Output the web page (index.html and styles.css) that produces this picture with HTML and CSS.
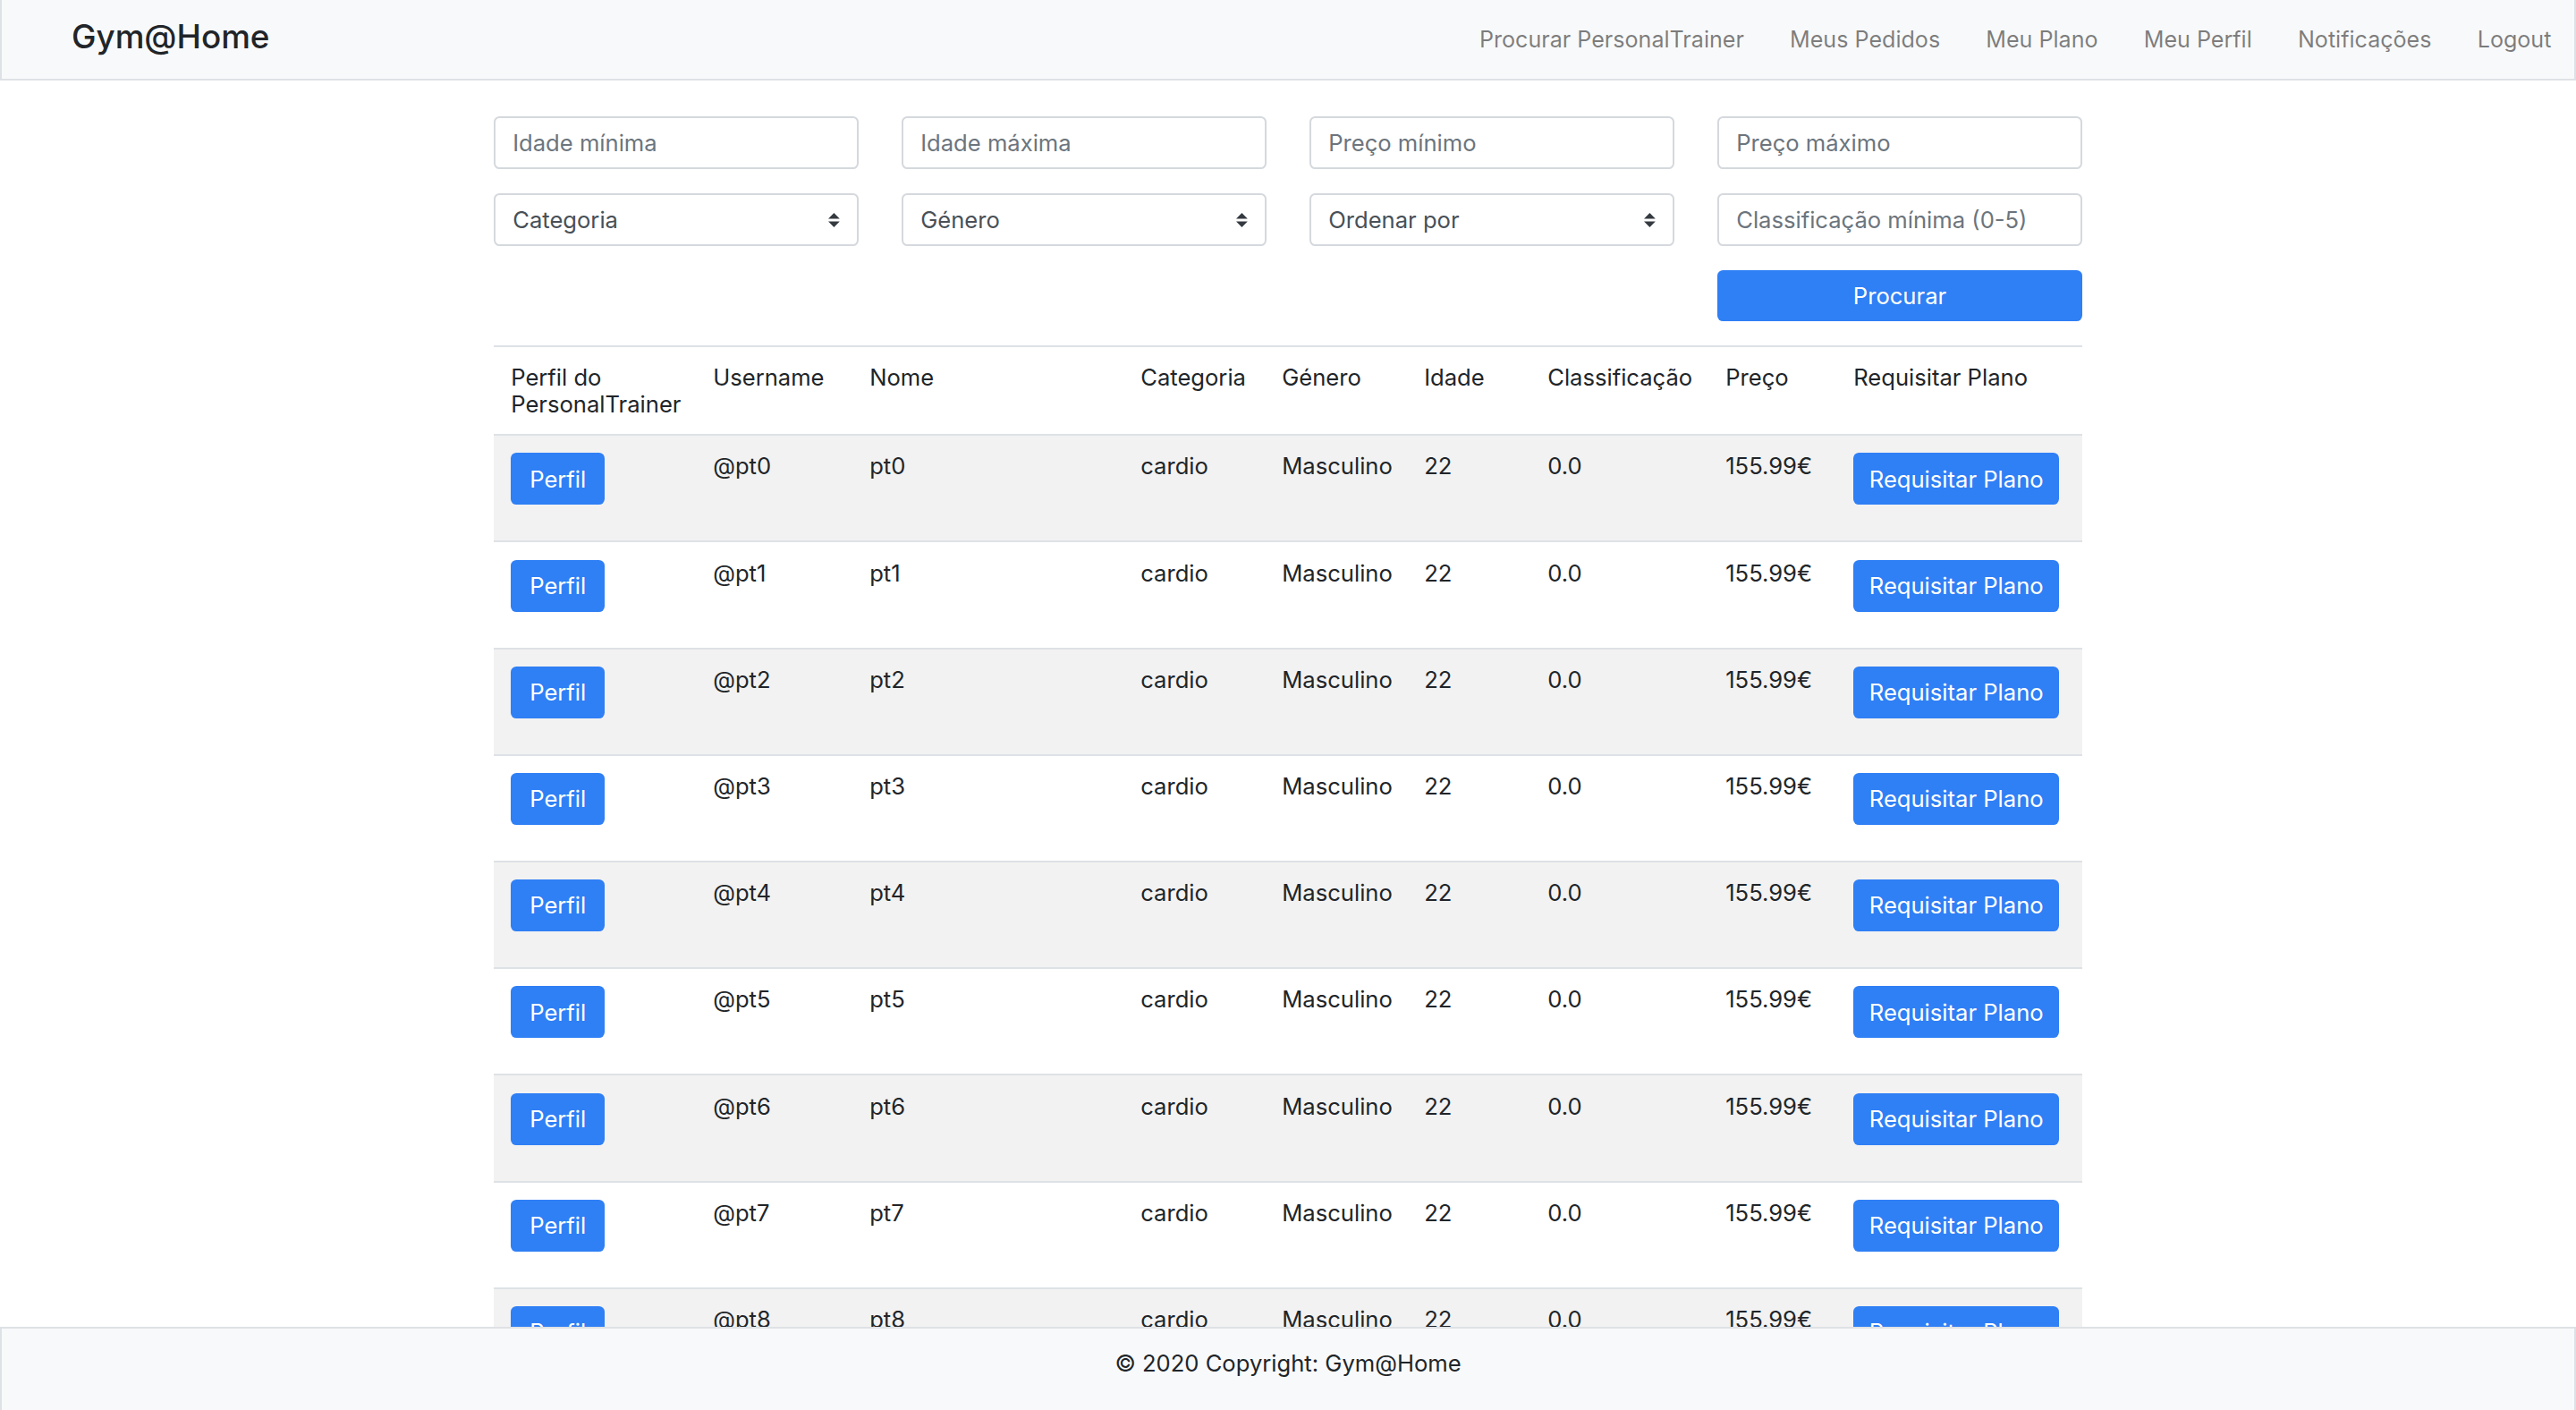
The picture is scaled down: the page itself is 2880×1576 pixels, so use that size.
FILE: index.html
```html
<!DOCTYPE html>
<html lang="pt">
<head>
<meta charset="utf-8">
<title>Gym@Home</title>
<link rel="stylesheet" href="styles.css">
</head>
<body>
<header class="navbar">
  <a class="brand" href="#">Gym@Home</a>
  <nav class="nav">
    <a class="nav-link" href="#">Procurar PersonalTrainer</a>
    <a class="nav-link" href="#">Meus Pedidos</a>
    <a class="nav-link" href="#">Meu Plano</a>
    <a class="nav-link" href="#">Meu Perfil</a>
    <a class="nav-link" href="#">Notificações</a>
    <a class="nav-link" href="#">Logout</a>
  </nav>
</header>

<main class="container">
  <form class="filters">
    <input class="form-control" type="text" placeholder="Idade mínima">
    <input class="form-control" type="text" placeholder="Idade máxima">
    <input class="form-control" type="text" placeholder="Preço mínimo">
    <input class="form-control" type="text" placeholder="Preço máximo">
    <div class="select-wrap">
      <select class="form-control custom-select"><option>Categoria</option></select>
      <svg class="select-arrow" viewBox="0 0 4 5" width="12.8" height="16"><path d="M2 0L0 2h4zm0 5L0 3h4z" fill="#343a40"/></svg>
    </div>
    <div class="select-wrap">
      <select class="form-control custom-select"><option>Género</option></select>
      <svg class="select-arrow" viewBox="0 0 4 5" width="12.8" height="16"><path d="M2 0L0 2h4zm0 5L0 3h4z" fill="#343a40"/></svg>
    </div>
    <div class="select-wrap">
      <select class="form-control custom-select"><option>Ordenar por</option></select>
      <svg class="select-arrow" viewBox="0 0 4 5" width="12.8" height="16"><path d="M2 0L0 2h4zm0 5L0 3h4z" fill="#343a40"/></svg>
    </div>
    <input class="form-control" type="text" placeholder="Classificação mínima (0-5)">
    <button class="btn btn-primary btn-search" type="button">Procurar</button>
  </form>

  <table class="table">
    <thead>
      <tr>
        <th class="c-perfil">Perfil do PersonalTrainer</th>
        <th class="c-user">Username</th>
        <th class="c-nome">Nome</th>
        <th class="c-cat">Categoria</th>
        <th class="c-gen">Género</th>
        <th class="c-idade">Idade</th>
        <th class="c-class">Classificação</th>
        <th class="c-preco">Preço</th>
        <th class="c-req">Requisitar Plano</th>
      </tr>
    </thead>
    <tbody>
      <tr><td><button class="btn btn-primary btn-perfil">Perfil</button></td><td>@pt0</td><td>pt0</td><td>cardio</td><td>Masculino</td><td>22</td><td>0.0</td><td>155.99€</td><td><button class="btn btn-primary">Requisitar Plano</button></td></tr>
      <tr><td><button class="btn btn-primary btn-perfil">Perfil</button></td><td>@pt1</td><td>pt1</td><td>cardio</td><td>Masculino</td><td>22</td><td>0.0</td><td>155.99€</td><td><button class="btn btn-primary">Requisitar Plano</button></td></tr>
      <tr><td><button class="btn btn-primary btn-perfil">Perfil</button></td><td>@pt2</td><td>pt2</td><td>cardio</td><td>Masculino</td><td>22</td><td>0.0</td><td>155.99€</td><td><button class="btn btn-primary">Requisitar Plano</button></td></tr>
      <tr><td><button class="btn btn-primary btn-perfil">Perfil</button></td><td>@pt3</td><td>pt3</td><td>cardio</td><td>Masculino</td><td>22</td><td>0.0</td><td>155.99€</td><td><button class="btn btn-primary">Requisitar Plano</button></td></tr>
      <tr><td><button class="btn btn-primary btn-perfil">Perfil</button></td><td>@pt4</td><td>pt4</td><td>cardio</td><td>Masculino</td><td>22</td><td>0.0</td><td>155.99€</td><td><button class="btn btn-primary">Requisitar Plano</button></td></tr>
      <tr><td><button class="btn btn-primary btn-perfil">Perfil</button></td><td>@pt5</td><td>pt5</td><td>cardio</td><td>Masculino</td><td>22</td><td>0.0</td><td>155.99€</td><td><button class="btn btn-primary">Requisitar Plano</button></td></tr>
      <tr><td><button class="btn btn-primary btn-perfil">Perfil</button></td><td>@pt6</td><td>pt6</td><td>cardio</td><td>Masculino</td><td>22</td><td>0.0</td><td>155.99€</td><td><button class="btn btn-primary">Requisitar Plano</button></td></tr>
      <tr><td><button class="btn btn-primary btn-perfil">Perfil</button></td><td>@pt7</td><td>pt7</td><td>cardio</td><td>Masculino</td><td>22</td><td>0.0</td><td>155.99€</td><td><button class="btn btn-primary">Requisitar Plano</button></td></tr>
      <tr><td><button class="btn btn-primary btn-perfil">Perfil</button></td><td>@pt8</td><td>pt8</td><td>cardio</td><td>Masculino</td><td>22</td><td>0.0</td><td>155.99€</td><td><button class="btn btn-primary">Requisitar Plano</button></td></tr>
      <tr><td><button class="btn btn-primary btn-perfil">Perfil</button></td><td>@pt9</td><td>pt9</td><td>cardio</td><td>Masculino</td><td>22</td><td>0.0</td><td>155.99€</td><td><button class="btn btn-primary">Requisitar Plano</button></td></tr>
    </tbody>
  </table>
</main>

<footer class="footer">© 2020 Copyright: Gym@Home</footer>
</body>
</html>
```

FILE: styles.css
```css
* { box-sizing: border-box; }

body {
  margin: 0;
  font-family: Inter, "Noto Sans", "Liberation Sans", sans-serif;
  font-size: 25.6px;
  line-height: 29.4px;
  color: #212529;
  background: #fff;
}

.navbar {
  display: flex;
  align-items: center;
  justify-content: space-between;
  height: 90px;
  background: #f8f9fa;
  border: 2px solid #dee2e6;
  border-top: 0;
  padding-left: 78px;
}

.brand {
  font-size: 36.8px;
  line-height: 46px;
  color: #212529;
  text-decoration: none;
  font-weight: 500;
  padding-bottom: 6px;
}

.nav {
  display: flex;
  align-items: center;
}

.nav-link {
  color: rgba(0, 0, 0, 0.5);
  text-decoration: none;
  font-size: 25.1px;
  padding: 0 25.6px;
  line-height: 38.4px;
}

.container {
  width: 1776px;
  margin: 40px auto 0;
  padding-bottom: 120px;
}

.filters {
  display: grid;
  grid-template-columns: repeat(4, 408px);
  column-gap: 48px;
  row-gap: 27px;
}

.form-control {
  display: block;
  width: 100%;
  height: 59px;
  padding: 0 19.2px;
  font-family: inherit;
  font-size: 25.6px;
  color: #495057;
  background: #fff;
  border: 2px solid #d5d9dd;
  border-radius: 6.4px;
  outline: none;
}

.form-control::placeholder {
  color: #6c757d;
  opacity: 1;
}

.select-wrap {
  position: relative;
}

.custom-select {
  appearance: none;
  -webkit-appearance: none;
  padding-right: 50px;
}

.select-arrow {
  position: absolute;
  right: 21px;
  top: 50%;
  transform: translateY(-50%);
  pointer-events: none;
}

.btn {
  display: inline-flex;
  align-items: center;
  justify-content: center;
  height: 58px;
  padding: 0 17.6px;
  font-family: inherit;
  font-size: 25.6px;
  line-height: 1;
  color: #fff;
  border: 0;
  border-radius: 6.4px;
  cursor: pointer;
}

.btn-perfil {
  padding: 0 21px;
}

.btn-primary {
  background: #2f7ff5;
}

.btn-search {
  grid-column: 4;
  width: 100%;
  height: 57px;
}

.table {
  width: 100%;
  margin-top: 27px;
  border-collapse: collapse;
  table-layout: fixed;
}

.table th,
.table td {
  text-align: left;
  vertical-align: top;
  font-weight: 400;
  padding: 19.2px 19.2px;
  border-top: 2px solid #dee2e6;
}

.table td {
  padding-bottom: 40px;
}

.table tbody tr:nth-child(odd) {
  background: #f2f2f2;
}

.c-perfil { width: 226px; }
.c-user { width: 175px; }
.c-nome { width: 303px; }
.c-cat { width: 158px; }
.c-gen { width: 159px; }
.c-idade { width: 138px; }
.c-class { width: 199px; }
.c-preco { width: 143px; }
.c-req { width: 275px; }

.footer {
  position: fixed;
  left: 0;
  right: 0;
  bottom: 0;
  height: 93px;
  padding-top: 24px;
  text-align: center;
  background: #f8f9fa;
  border: 2px solid #dee2e6;
  border-bottom: 0;
  color: #212529;
}
```
